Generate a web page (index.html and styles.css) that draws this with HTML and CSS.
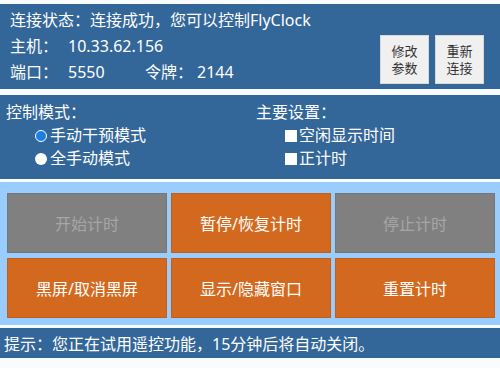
FILE: index.html
```html
<!DOCTYPE html>
<html lang="zh-CN">
<head>
  <meta charset="UTF-8">
  <meta name="viewport" content="width=device-width, initial-scale=1.0">
  <title>FlyClock 遥控</title>
  <link rel="stylesheet" href="styles.css">
</head>
<body>
  <!-- Connection panel -->
  <div class="panel conn-panel">
    <div class="conn-line">连接状态：连接成功，您可以控制FlyClock</div>
    <div class="conn-row">
      <div class="conn-info">
        <div class="conn-line"><span class="label">主机：</span>10.33.62.156</div>
        <div class="conn-line">
          <span class="label">端口：</span><span class="value">5550</span><span class="label short">令牌：</span>2144
        </div>
      </div>
      <div class="conn-actions">
        <button class="small-btn">修改<br>参数</button>
        <button class="small-btn">重新<br>连接</button>
      </div>
    </div>
  </div>

  <!-- Settings panel -->
  <div class="panel settings-panel">
    <div class="settings-col">
      <div class="settings-title">控制模式：</div>
      <div class="option"><span class="radio checked"></span>手动干预模式</div>
      <div class="option"><span class="radio"></span>全手动模式</div>
    </div>
    <div class="settings-col">
      <div class="settings-title">主要设置：</div>
      <div class="option"><span class="checkbox"></span>空闲显示时间</div>
      <div class="option"><span class="checkbox"></span>正计时</div>
    </div>
  </div>

  <!-- Control buttons -->
  <div class="control-area">
    <button class="ctrl-btn disabled">开始计时</button>
    <button class="ctrl-btn">暂停/恢复计时</button>
    <button class="ctrl-btn disabled">停止计时</button>
    <button class="ctrl-btn">黑屏/取消黑屏</button>
    <button class="ctrl-btn">显示/隐藏窗口</button>
    <button class="ctrl-btn">重置计时</button>
  </div>

  <div class="panel tip-panel">提示：您正在试用遥控功能，15分钟后将自动关闭。</div>
</body>
</html>
```

FILE: styles.css
```css
:root {
  --panel-color: #336699;
  --area-color: #99ccff;
  --orange: #d2691e;
  --gray: #808080;
}

* {
  margin: 0;
  padding: 0;
  box-sizing: border-box;
  font-family: "Noto Sans", "Noto Sans CJK SC", sans-serif;
}

body {
  background-color: #f8fcff;
  padding-top: 4px;
  width: 500px;
}

.panel {
  background-color: var(--panel-color);
  color: #ffffff;
  font-size: 16px;
}

/* Connection panel */
.conn-panel {
  padding: 3px 16px 4px 10px;
}

.conn-line {
  line-height: 26px;
  white-space: nowrap;
}

.conn-row {
  display: flex;
  justify-content: space-between;
  align-items: flex-end;
}

.label {
  display: inline-block;
  width: 58px;
}

.label.short {
  width: 52px;
}

.value {
  display: inline-block;
  width: 77px;
}

.conn-actions {
  display: flex;
  gap: 6px;
  margin-bottom: 1px;
}

.small-btn {
  width: 49px;
  height: 49px;
  background-color: #f0f0f0;
  border: 1px solid #d8d8d8;
  color: #333333;
  font-size: 13px;
  line-height: 17px;
}

/* Settings panel */
.settings-panel {
  margin-top: 6px;
  padding: 6px 0 9px 6px;
  display: grid;
  grid-template-columns: 250px 1fr;
}

.settings-title,
.option {
  line-height: 23px;
}

.option {
  display: flex;
  align-items: center;
  padding-left: 29px;
}

.radio {
  width: 12px;
  height: 12px;
  border-radius: 50%;
  background-color: #ffffff;
  margin-right: 3px;
}

.radio.checked {
  background-color: #1a7fe0;
  border: 1.5px solid #ffffff;
}

.checkbox {
  width: 12px;
  height: 12px;
  background-color: #ffffff;
  margin-right: 2px;
}

/* Control buttons */
.control-area {
  margin-top: 3px;
  background-color: var(--area-color);
  padding: 11px 5px 7px 7px;
  display: grid;
  grid-template-columns: repeat(3, 1fr);
  gap: 5px 4px;
}

.ctrl-btn {
  height: 60px;
  background-color: var(--orange);
  border: 1px solid #c25e17;
  color: #ffffff;
  font-size: 16px;
}

.ctrl-btn.disabled {
  background-color: var(--gray);
  border-color: #777777;
  color: #a6a6a6;
}

/* Tip bar */
.tip-panel {
  margin-top: 3px;
  height: 30px;
  line-height: 30px;
  padding: 1px 0 0 4px;
  white-space: nowrap;
}
```
